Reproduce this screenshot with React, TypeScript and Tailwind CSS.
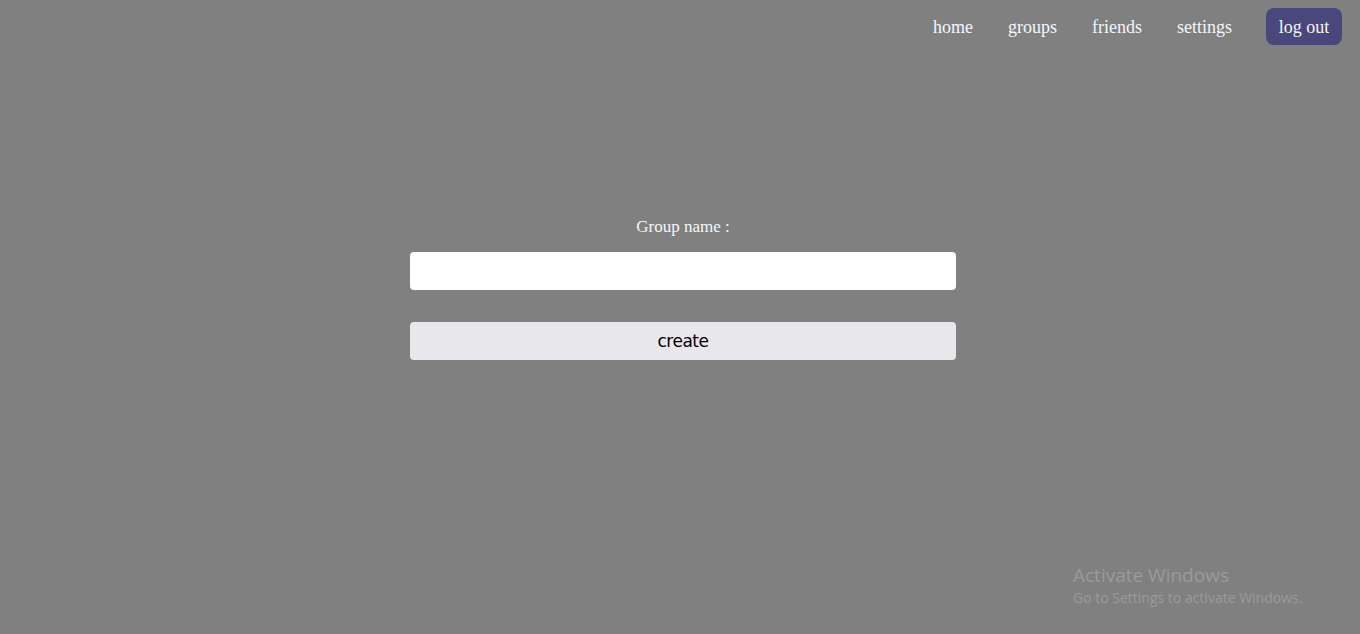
const navItems = ['home', 'groups', 'friends', 'settings'];

export default function App() {
  return (
    <div className="relative h-[634px] w-full overflow-hidden bg-[#808080] font-['Liberation_Serif',serif]">
      <nav className="flex items-center justify-end pr-[18px] pt-[8px]">
        <ul className="flex items-center gap-[35px] pt-[2px] text-[18px] text-[#f4f6fb]">
          {navItems.map((item) => (
            <li key={item} className="cursor-pointer">
              {item}
            </li>
          ))}
        </ul>
        <button className="ml-[34px] h-[37px] w-[76px] rounded-[8px] bg-[#4a477c] pt-[2px] text-[18px] text-[#f4f6fb]">
          log out
        </button>
      </nav>

      <div className="mx-auto mt-[172px] flex w-[546px] translate-x-[3px] flex-col items-center">
        <label className="text-[17px] leading-[20px] text-[#f4f6fb]">Group name :</label>
        <input
          type="text"
          className="mt-[15px] h-[38px] w-full rounded-[4px] bg-white px-2 outline-none"
        />
        <button className="mt-[32px] h-[38px] w-full rounded-[4px] bg-[#e8e7ec] pt-[2px] font-['DejaVu_Sans',sans-serif] text-[17px] tracking-[-0.5px] text-black">
          create
        </button>
      </div>

      <div className="absolute left-[1073px] top-[563px] font-['Open_Sans',sans-serif] text-[#9a9a9a]">
        <div className="text-[19px] leading-[24px]">Activate Windows</div>
        <div className="text-[14px] leading-[22px]">Go to Settings to activate Windows.</div>
      </div>
    </div>
  );
}
